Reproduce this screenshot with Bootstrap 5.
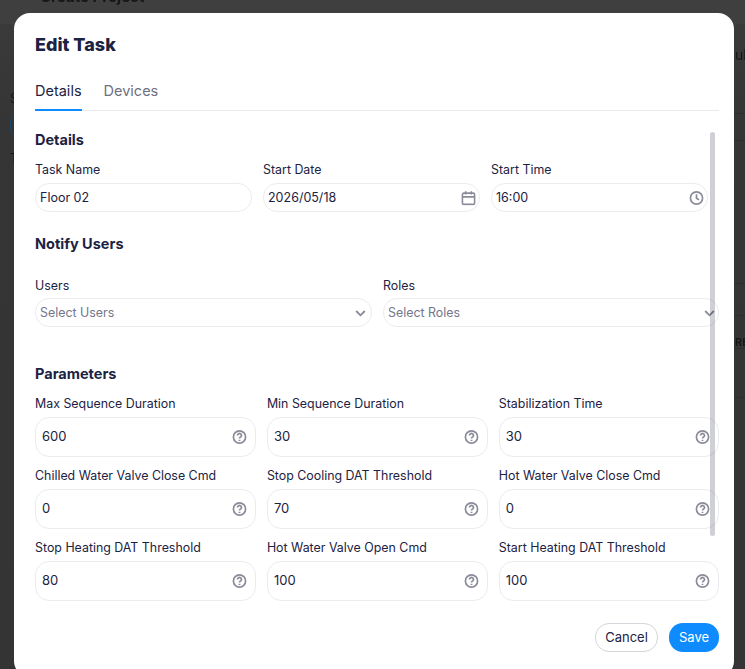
<!DOCTYPE html>
<html lang="en">
<head>
<meta charset="utf-8">
<link href="https://cdn.jsdelivr.net/npm/bootstrap@5.3.0/dist/css/bootstrap.min.css" rel="stylesheet">
<style>
html,body{height:100%;overflow:hidden}
body{background:linear-gradient(#3f3f3f 0,#3f3f3f 24px,#3a3a3a 24px,#353535 120px,#343434 100%);font-family:Inter,"Noto Sans",sans-serif;color:#1c2242;font-size:13px}
.bd{position:absolute;color:#161616;white-space:nowrap;line-height:1}
.bd-title{left:40px;top:-11px;font-size:15px;font-weight:700}
.bd-s{left:10px;top:92px;font-size:13px}
.bd-t{left:10px;top:152px;font-size:13px}
.bd-ul{left:735px;top:48px;font-size:14px}
.bd-re{left:735px;top:337px;font-size:11px;font-weight:600}
.bd-field{position:absolute;left:10px;top:112px;width:20px;height:26px;border:1.5px solid #1f4564;border-radius:12px}
.bd-line{position:absolute;left:734px;right:0;height:1px;background:#2d2d2d}
.l1{top:113px}.l2{top:140px}.l3{top:283px}.l4{top:315px}.l5{top:348px}.l6{top:397px}
.edit-dialog{position:absolute;left:14px;top:13px;width:720px;height:664px;background:#fff;border:0;border-radius:16px;padding:20px 15px 0 21px;display:block}
.edit-dialog h1{font-size:18px;font-weight:800;line-height:24px;margin:0 0 24px;color:#1c2242}
.edit-tabs{border-bottom:1px solid #e9e9ee;gap:22px;height:30px;width:684px;flex-wrap:nowrap}
.edit-tabs .nav-link{padding:0;height:30px;line-height:20px;font-size:14.5px;color:#6f7080;border:0;border-bottom:2px solid transparent;margin:0;border-radius:0;background:none}
.edit-tabs .nav-link.active{color:#1c2242;border-bottom-color:#0d8bff}
.scroll-area{position:relative;height:488px}
.sb{position:absolute;left:675px;top:21px;width:5px;height:404px;background:#cfcfd6;border-radius:3px;z-index:3;mix-blend-mode:multiply}
.sec{font-size:14.5px;font-weight:700;line-height:20px;color:#1c2242;margin:0}
.sec-details{padding-top:19px;margin-bottom:12px}
.sec-notify{margin-top:22px;margin-bottom:24px}
.sec-params{margin-top:37px;margin-bottom:12px}
.fl{font-size:12.4px;line-height:16px;color:#1c2242;margin:0 0 5px;display:block;white-space:nowrap}
.fld{position:relative;background:#fff;border:1px solid #ececf0;border-radius:14px;display:flex;align-items:center;font-size:12.5px;color:#1c2242;padding:1px 4px 0;height:29px}
.fld.tall{height:40px;padding:0 6px;font-size:13px}
.fld.ph{color:#74758a;font-size:12.4px}
.fld svg{position:absolute;right:3px;top:50%;transform:translateY(-50%);color:#8a8b99}
.fld.tall svg{right:8px}
.fld.ph svg{right:5px}
.g2>div:last-child .fld.ph svg{right:3px}
.g3a{display:grid;grid-template-columns:217px 217px 217px;column-gap:11px;width:673px}
.g2{display:grid;grid-template-columns:337px 336px;column-gap:11px;width:684px}
.g2 .fl{margin-bottom:4px}
.g3b{display:grid;grid-template-columns:221px 221px 220px;column-gap:10.9px;row-gap:11px;width:684px}
.btn-c,.btn-s{font-size:13px;height:29px;border-radius:14px;padding:0;display:inline-flex;align-items:center;justify-content:center}
.btn-c{width:63px;border:1px solid #d5d5db;background:#fff;color:#1c2242}
.btn-s{width:50px;border:0;background:#0d8bff;color:#fff}
.foot{position:absolute;right:15px;top:610px;gap:11px}
</style>
</head>
<body>
<div class="bd bd-title">Create Project</div>
<div class="bd bd-s">S</div>
<div class="bd-field"></div>
<div class="bd bd-t">T</div>
<div class="bd bd-ul">ul</div>
<div class="bd bd-re">RE</div>
<div class="bd-line l1"></div><div class="bd-line l2"></div><div class="bd-line l3"></div><div class="bd-line l4"></div><div class="bd-line l5"></div><div class="bd-line l6"></div>
<svg width="0" height="0" class="d-block position-absolute">
  <symbol id="q" viewBox="0 0 16 16"><g fill="none" stroke="currentColor" stroke-width="1.8"><circle cx="8" cy="8" r="6.5"/><path d="M5.900 6.300a2.100 2.100 0 1 1 3.200 1.800C8.400 8.500 8 8.900 8 9.600"/><path d="M8 10.900v1.300"/></g></symbol>
  <symbol id="chev" viewBox="0 0 12 12"><path d="M1.300 3.800 6 8.500l4.700-4.700" fill="none" stroke="currentColor" stroke-width="2"/></symbol>
</svg>
<div class="modal-content edit-dialog">
  <h1>Edit Task</h1>
  <ul class="nav edit-tabs">
    <li class="nav-item"><a class="nav-link active" href="#">Details</a></li>
    <li class="nav-item"><a class="nav-link" href="#">Devices</a></li>
  </ul>
  <div class="scroll-area">
    <div class="sb"></div>
    <div class="sec sec-details">Details</div>
    <div class="g3a">
      <div><label class="fl">Task Name</label><div class="fld">Floor 02</div></div>
      <div><label class="fl">Start Date</label><div class="fld">2026/05/18
        <svg width="15" height="15" viewBox="0 0 16 16" fill="none" stroke="currentColor" stroke-width="1.7"><rect x="1.500" y="2.800" width="13" height="12" rx="1.500"/><path d="M1.500 6.800h13M5 .8v3.400M11 .8v3.400"/></svg></div></div>
      <div><label class="fl">Start Time</label><div class="fld">16:00
        <svg width="15" height="15" viewBox="0 0 16 16" fill="none" stroke="currentColor" stroke-width="1.8"><circle cx="8" cy="8" r="6.500"/><path d="M8 4v4.300l2.800 1.700"/></svg></div></div>
    </div>
    <div class="sec sec-notify">Notify Users</div>
    <div class="g2">
      <div><label class="fl">Users</label><div class="fld ph">Select Users<svg width="11" height="11"><use href="#chev"/></svg></div></div>
      <div><label class="fl">Roles</label><div class="fld ph">Select Roles<svg width="11" height="11"><use href="#chev"/></svg></div></div>
    </div>
    <div class="sec sec-params">Parameters</div>
    <div class="g3b">
      <div><label class="fl">Max Sequence Duration</label><div class="fld tall">600<svg width="15" height="15"><use href="#q"/></svg></div></div>
      <div><label class="fl">Min Sequence Duration</label><div class="fld tall">30<svg width="15" height="15"><use href="#q"/></svg></div></div>
      <div><label class="fl">Stabilization Time</label><div class="fld tall">30<svg width="15" height="15"><use href="#q"/></svg></div></div>
      <div><label class="fl">Chilled Water Valve Close Cmd</label><div class="fld tall">0<svg width="15" height="15"><use href="#q"/></svg></div></div>
      <div><label class="fl">Stop Cooling DAT Threshold</label><div class="fld tall">70<svg width="15" height="15"><use href="#q"/></svg></div></div>
      <div><label class="fl">Hot Water Valve Close Cmd</label><div class="fld tall">0<svg width="15" height="15"><use href="#q"/></svg></div></div>
      <div><label class="fl">Stop Heating DAT Threshold</label><div class="fld tall">80<svg width="15" height="15"><use href="#q"/></svg></div></div>
      <div><label class="fl">Hot Water Valve Open Cmd</label><div class="fld tall">100<svg width="15" height="15"><use href="#q"/></svg></div></div>
      <div><label class="fl">Start Heating DAT Threshold</label><div class="fld tall">100<svg width="15" height="15"><use href="#q"/></svg></div></div>
    </div>
  </div>
  <div class="foot d-flex">
    <button type="button" class="btn btn-c">Cancel</button>
    <button type="button" class="btn btn-s">Save</button>
  </div>
</div>
<script src="https://cdn.jsdelivr.net/npm/bootstrap@5.3.0/dist/js/bootstrap.bundle.min.js"></script>
</body>
</html>
